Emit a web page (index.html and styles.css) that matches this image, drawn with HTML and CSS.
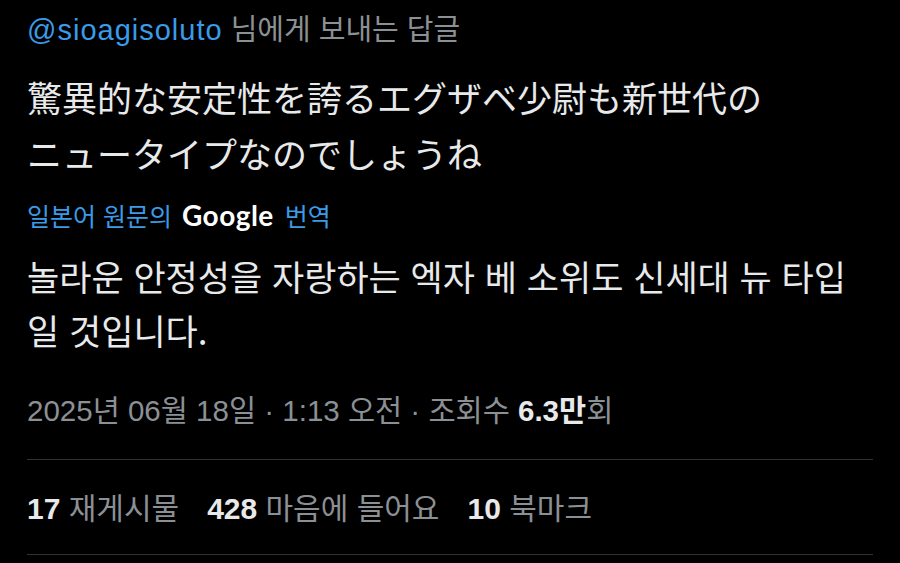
FILE: index.html
```html
<!doctype html>
<html lang="ko">
    <head>
        <meta charset="UTF-8" />
        <title>Tweet detail</title>
        <link rel="stylesheet" href="styles.css">
    </head>
    <body>
        <main class="tweet">
            <!-- reply target -->
            <div class="reply">
                <span class="handle">@sioagisoluto</span> 님에게 보내는 답글
            </div>

            <!-- original text -->
            <p class="original" lang="ja">
                驚異的な安定性を誇るエグザベ少尉も新世代の<br />ニュータイプなのでしょうね
            </p>

            <div class="translated-by">
                일본어 원문의 <span class="google">Google</span> 번역
            </div>

            <p class="translation">
                놀라운 안정성을 자랑하는 엑자 베 소위도 신세대 뉴 타입<br />일 것입니다.
            </p>

            <div class="meta">
                2025년 06월 18일 · 1:13 오전 · 조회수 <strong>6.3만</strong>회
            </div>

            <div class="stats">
                <span><strong>17</strong> 재게시물</span>
                <span><strong>428</strong> 마음에 들어요</span>
                <span><strong>10</strong> 북마크</span>
            </div>
        </main>
    </body>
</html>
```

FILE: styles.css
```css
:root {
    --color-bg: #000000;
    --color-text: #e7e9ea;
    --color-muted: #8b9095;
    --color-link: #3a9be8;
    --color-border: #2f3336;
}

body {
    margin: 0;
    background: var(--color-bg);
    color: var(--color-text);
    font-family: "Liberation Sans", "Noto Sans CJK KR", sans-serif;
}

.tweet {
    padding: 12px 27px 0;
}

.reply {
    font-size: 29px;
    line-height: 36px;
    color: var(--color-muted);
}

.handle {
    color: var(--color-link);
    letter-spacing: 1px;
}

.original {
    margin: 21px 0 0;
    font-family: "Noto Sans CJK JP", sans-serif;
    font-size: 35px;
    line-height: 56px;
}

.translated-by {
    margin-top: 16px;
    font-size: 25px;
    line-height: 36px;
    color: var(--color-link);
}

.google {
    color: #ffffff;
    font-family: "Lato", sans-serif;
    font-weight: 700;
    font-size: 28px;
    letter-spacing: 0.5px;
    margin: 0 4px 0 3px;
}

.translation {
    margin: 14px 0 0;
    font-family: "Noto Sans CJK KR", sans-serif;
    font-size: 35px;
    line-height: 54px;
}

.meta {
    margin-top: 36px;
    padding-bottom: 30px;
    border-bottom: 1px solid var(--color-border);
    font-size: 29.5px;
    line-height: 36px;
    color: var(--color-muted);
}

.meta strong {
    color: var(--color-text);
}

.stats {
    display: flex;
    gap: 28px;
    padding: 31px 0 27px;
    border-bottom: 1px solid var(--color-border);
    font-size: 30px;
    line-height: 36px;
    color: var(--color-muted);
}

.stats strong {
    color: var(--color-text);
}
```
